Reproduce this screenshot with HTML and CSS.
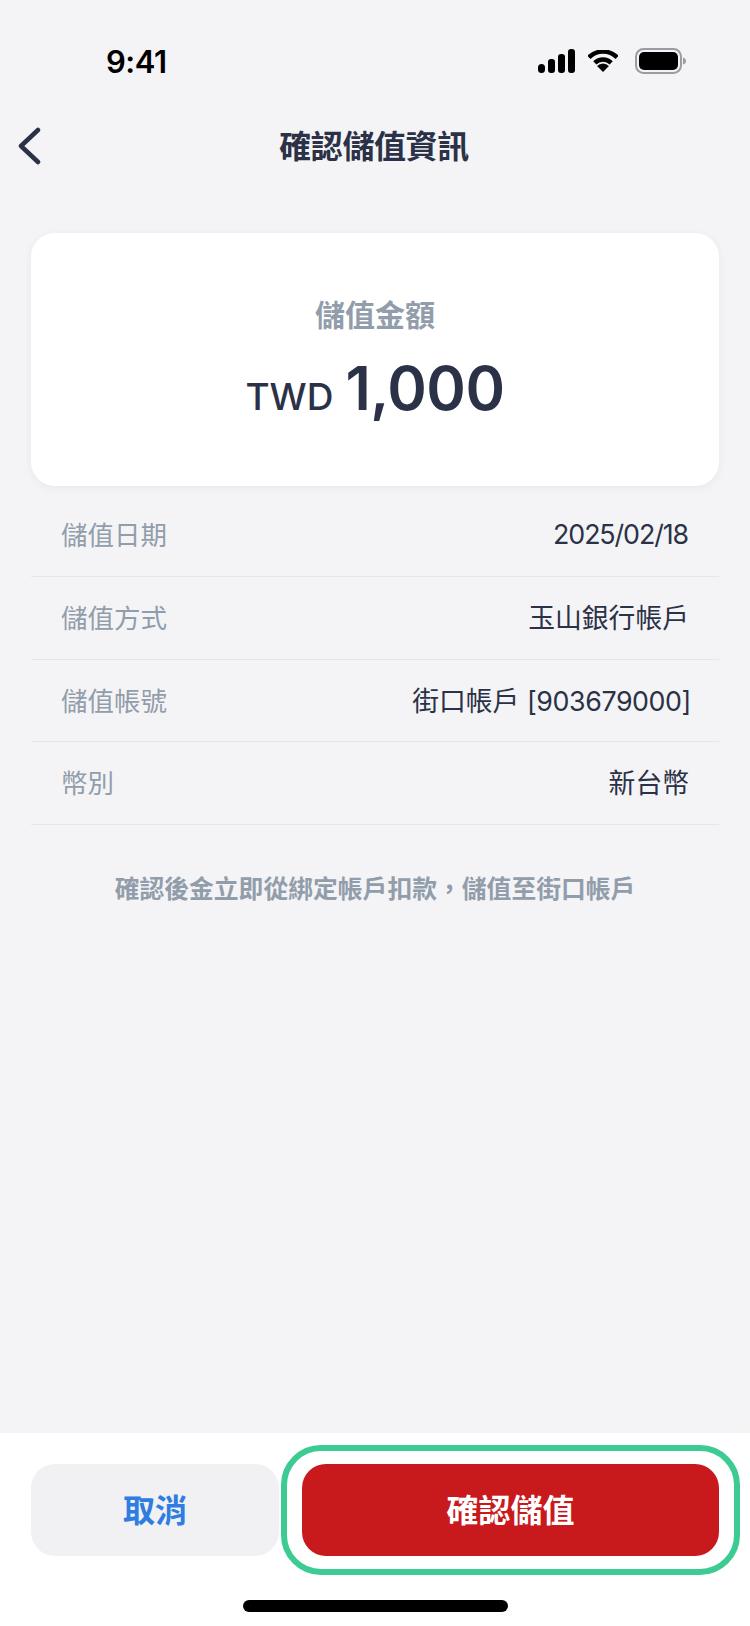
FILE: index.html
```html
<!DOCTYPE html>
<html lang="zh-Hant">
<head>
<meta charset="UTF-8">
<meta name="viewport" content="width=device-width, initial-scale=1.0">
<title>確認儲值資訊</title>
<link rel="stylesheet" href="styles.css">
</head>
<body>
    <div class="screen">
        <div class="status-bar">
            <span class="time">9:41</span>
            <div class="status-icons">
                <svg class="icon-signal" width="37" height="24" viewBox="0 0 37 24">
                    <rect x="0" y="15" width="7" height="9" rx="3.5"/>
                    <rect x="10" y="10" width="7" height="14" rx="3"/>
                    <rect x="20" y="5" width="7" height="19" rx="3"/>
                    <rect x="30" y="0" width="7" height="24" rx="3"/>
                </svg>
                <svg class="icon-wifi" width="30" height="22" viewBox="0 0 33 24">
                    <path d="M1 8 A22 22 0 0 1 32 8" fill="none" stroke="#000" stroke-width="5"/>
                    <path d="M7.500 14 A13 13 0 0 1 25.500 14" fill="none" stroke="#000" stroke-width="5"/>
                    <path d="M16.500 24 L10 17.500 A9 9 0 0 1 23 17.500 Z"/>
                </svg>
                <svg class="icon-battery" width="51" height="26" viewBox="0 0 51 26">
                    <rect x="1" y="1" width="45" height="24" rx="7.500" fill="none" stroke="#9a9ca3" stroke-width="2"/>
                    <rect x="4" y="4" width="39" height="18" rx="5"/>
                    <path d="M48 9.500 C50 10 51 11.500 51 13 C51 14.500 50 16 48 16.500 Z" fill="#9a9ca3"/>
                </svg>
            </div>
        </div>

        <header class="nav">
            <svg class="back" width="24" height="38" viewBox="0 0 24 38">
                <path d="M21 3 L4 19 L21 35" fill="none" stroke="#2b3146" stroke-width="4.500" stroke-linecap="round" stroke-linejoin="round"/>
            </svg>
            <h1>確認儲值資訊</h1>
        </header>

        <main class="content">
            <section class="amount-card">
                <p class="amount-label">儲值金額</p>
                <p class="amount"><span class="currency">TWD</span><span class="value">1,000</span></p>
            </section>

            <ul class="details">
                <li class="row"><span class="row-label">儲值日期</span><span class="row-value date">2025/02/18</span></li>
                <li class="row"><span class="row-label">儲值方式</span><span class="row-value">玉山銀行帳戶</span></li>
                <li class="row"><span class="row-label">儲值帳號</span><span class="row-value">街口帳戶 <span class="account-no">[903679000]</span></span></li>
                <li class="row"><span class="row-label">幣別</span><span class="row-value">新台幣</span></li>
            </ul>

            <p class="note">確認後金立即從綁定帳戶扣款，儲值至街口帳戶</p>
        </main>

        <footer class="footer">
            <div class="actions">
                <button class="button cancel">取消</button>
                <button class="button confirm">確認儲值<span class="ring"></span></button>
            </div>
            <div class="home-indicator"></div>
        </footer>
    </div>
</body>
</html>
```

FILE: styles.css
```css
* {
    box-sizing: border-box;
}
body {
    margin: 0;
    font-family: Inter, "Noto Sans CJK TC", sans-serif;
    background-color: #f4f4f6;
    color: #2b3146;
}
.screen {
    display: flex;
    flex-direction: column;
    width: 750px;
    height: 1626px;
    overflow: hidden;
}

/* status bar */
.status-bar {
    display: flex;
    justify-content: space-between;
    align-items: center;
    height: 62px;
    margin-top: 30px;
    padding: 0 64px 0 106px;
}
.time {
    font-size: 31px;
    font-weight: 600;
    letter-spacing: -0.5px;
    color: #000;
}
.status-icons {
    display: flex;
    align-items: center;
    gap: 17px;
}
.icon-signal {
    margin-right: -4px;
}

/* nav */
.nav {
    position: relative;
    display: flex;
    justify-content: center;
    align-items: center;
    height: 108px;
    padding: 0 2px 4px 0;
}
.back {
    position: absolute;
    left: 17px;
    top: 35px;
}
h1 {
    margin: 0;
    font-size: 32px;
    font-weight: 700;
    letter-spacing: -0.4px;
}

/* amount */
.content {
    flex: 1;
    padding: 33px 31px 0;
}
.amount-card {
    height: 253px;
    padding-top: 60px;
    background-color: #fff;
    border-radius: 24px;
    box-shadow: 0 2px 8px rgba(43, 49, 70, 0.06);
    text-align: center;
}
.amount-label {
    margin: 0;
    font-size: 30px;
    line-height: 44px;
    font-weight: 700;
    color: #929dab;
}
.amount {
    display: flex;
    justify-content: center;
    align-items: baseline;
    gap: 12px;
    margin: 12px 0 0;
    line-height: 78px;
}
.currency {
    font-size: 37px;
    font-weight: 500;
}
.value {
    font-size: 60px;
    font-weight: 600;
    letter-spacing: -0.5px;
}

/* details */
.details {
    margin: 8.300px 0 0;
    padding: 0;
    list-style: none;
}
.row {
    display: flex;
    justify-content: space-between;
    align-items: center;
    height: 82.700px;
    padding: 0 30px 3px 30px;
    border-bottom: 1px solid #e4e6eb;
}
.row-label {
    font-size: 26.500px;
    color: #929dab;
}
.row-value {
    font-size: 26.800px;
    white-space: nowrap;
}
.date {
    margin-right: 1px;
    letter-spacing: -1.100px;
}
.account-no {
    margin-right: -2px;
    letter-spacing: -0.4px;
}

.note {
    margin: 46px 0 0;
    font-size: 24.800px;
    line-height: 36px;
    font-weight: 700;
    color: #929dab;
    text-align: center;
}

/* footer */
.footer {
    height: 193px;
    padding: 31px 31px 0;
    background-color: #fff;
}
.actions {
    display: flex;
    gap: 23px;
}
.button {
    height: 92px;
    padding: 0 0 4px;
    border: none;
    border-radius: 24px;
    font-family: inherit;
    font-size: 32px;
    font-weight: 700;
}
.cancel {
    width: 248px;
    background-color: #f1f1f3;
    color: #2f7de1;
}
.confirm {
    position: relative;
    flex: 1;
    background-color: #c8191c;
    color: #fff;
}
.ring {
    position: absolute;
    top: -19px;
    right: -21px;
    bottom: -19px;
    left: -21px;
    border: 6px solid #3bcb93;
    border-radius: 40px;
}
.home-indicator {
    width: 265px;
    height: 12px;
    margin: 44px auto 0;
    background-color: #000;
    border-radius: 6px;
}
```
